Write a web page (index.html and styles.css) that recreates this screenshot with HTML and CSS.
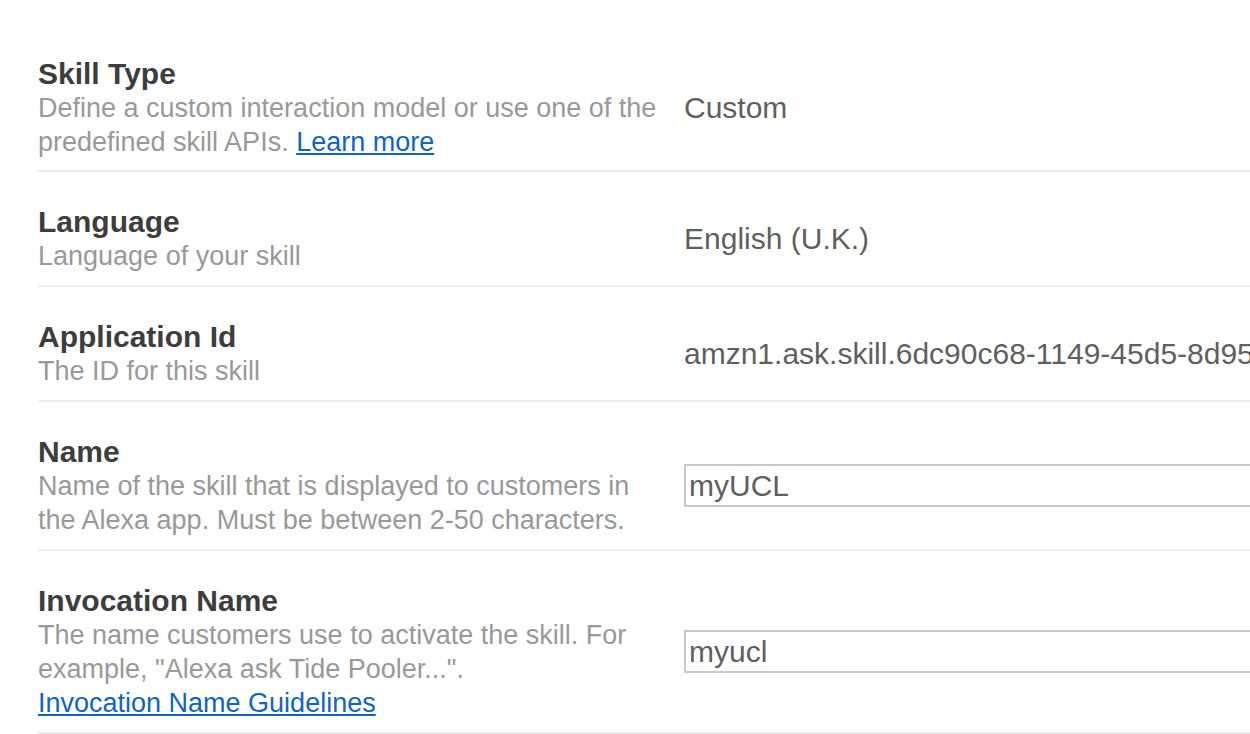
FILE: index.html
```html
<!DOCTYPE html>
<html lang="en">
<head>
<meta charset="utf-8">
<title>Skill Information</title>
<link rel="stylesheet" href="styles.css">
</head>
<body>
<div class="form">
  <div class="row">
    <div class="label">
      <div class="title">Skill Type</div>
      <div class="desc">Define a custom interaction model or use one of the predefined skill APIs. <a href="#" class="link">Learn more</a></div>
    </div>
    <div class="value">Custom</div>
  </div>
  <div class="row">
    <div class="label">
      <div class="title">Language</div>
      <div class="desc">Language of your skill</div>
    </div>
    <div class="value">English (U.K.)</div>
  </div>
  <div class="row">
    <div class="label">
      <div class="title">Application Id</div>
      <div class="desc">The ID for this skill</div>
    </div>
    <div class="value clip">amzn1.ask.skill.6dc90c68-1149-45d5-8d95</div>
  </div>
  <div class="row">
    <div class="label">
      <div class="title">Name</div>
      <div class="desc">Name of the skill that is displayed to customers in the Alexa app. Must be between 2-50 characters.</div>
    </div>
    <div class="value"><input class="field" type="text" value="myUCL"></div>
  </div>
  <div class="row">
    <div class="label">
      <div class="title">Invocation Name</div>
      <div class="desc">The name customers use to activate the skill. For example, "Alexa ask Tide Pooler...".<br><a href="#" class="link">Invocation Name Guidelines</a></div>
    </div>
    <div class="value"><input class="field" type="text" value="myucl"></div>
  </div>
</div>
</body>
</html>
```

FILE: styles.css
```css
html, body {
  margin: 0;
  padding: 0;
  overflow: hidden;
  background: #ffffff;
}
body {
  font-family: "Liberation Sans", Arial, sans-serif;
}
.form {
  width: 1212px;
  margin-left: 38px;
  padding-top: 24px;
}
.row {
  display: flex;
  align-items: center;
  padding: 32px 0 12px 0;
  border-bottom: 2px solid #ececec;
}
.row:first-child {
  padding-bottom: 11px;
}
.label {
  width: 630px;
  flex: 0 0 630px;
}
.title {
  font-size: 30px;
  font-weight: bold;
  line-height: 35px;
  color: #3d3d3d;
}
.desc {
  font-size: 27px;
  line-height: 34px;
  color: #999999;
}
.link {
  color: #0e66c0;
  text-decoration: underline;
}
.value {
  margin-left: 16px;
  flex: 1;
  min-width: 0;
  font-size: 30px;
  color: #5f5f5f;
}
.clip {
  white-space: nowrap;
  overflow: hidden;
}
.field {
  box-sizing: border-box;
  width: 100%;
  height: 43px;
  border: 2px solid #c9c9c9;
  border-right: none;
  padding: 0 3px;
  margin: 0;
  font-family: "Liberation Sans", Arial, sans-serif;
  font-size: 30px;
  color: #5f5f5f;
  background: #fff;
  outline: none;
}
```
